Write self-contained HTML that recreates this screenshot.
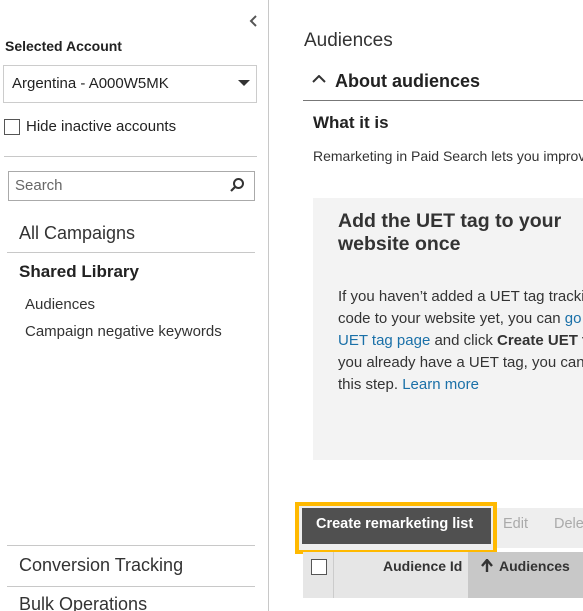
<!DOCTYPE html>
<html><head><style>
html,body{margin:0;width:583px;height:611px;overflow:hidden}
body{background:#fff;font-family:"Liberation Sans",Arial,sans-serif;color:#222;position:relative}
.a{position:absolute;white-space:nowrap}
.l{position:absolute;height:1px;background:#c8c8c8}
a{color:#1a70a8;text-decoration:none}
#r{position:absolute;left:269px;top:0;width:314px;height:611px;overflow:hidden}
#r .a{margin-left:-269px}
</style></head><body>
<div class="a" style="left:268px;top:0;width:1px;height:611px;background:#c8c8c8"></div>
<svg class="a" style="left:249px;top:14px" width="10" height="14"><path d="M7 2 L2 7 L7 12" stroke="#555" stroke-width="2" fill="none"/></svg>
<div class="a" style="left:5px;top:38px;font-size:14px;font-weight:bold">Selected Account</div>
<div class="a" style="left:3px;top:65px;width:252px;height:36px;border:1px solid #ccc"></div>
<div class="a" style="left:12px;top:75px;font-size:15px">Argentina - A000W5MK</div>
<svg class="a" style="left:238px;top:80px" width="12" height="7"><path d="M0 0 L12 0 L6 6 Z" fill="#333"/></svg>
<div class="a" style="left:4px;top:119px;width:14px;height:14px;border:1px solid #555"></div>
<div class="a" style="left:26px;top:118px;font-size:15px">Hide inactive accounts</div>
<div class="l" style="left:4px;top:156px;width:253px"></div>
<div class="a" style="left:8px;top:171px;width:245px;height:28px;border:1px solid #aaa"></div>
<div class="a" style="left:15px;top:177px;font-size:15px;color:#666">Search</div>
<svg class="a" style="left:229px;top:177px" width="16" height="16"><circle cx="9.5" cy="6.5" r="4.5" stroke="#333" stroke-width="2" fill="none"/><path d="M6 10 L2 14" stroke="#333" stroke-width="2.2"/></svg>
<div class="a" style="left:19px;top:223px;font-size:18px;color:#333">All Campaigns</div>
<div class="l" style="left:7px;top:252px;width:248px"></div>
<div class="a" style="left:19px;top:262px;font-size:17px;font-weight:bold">Shared Library</div>
<div class="a" style="left:25px;top:296px;font-size:15px;color:#333">Audiences</div>
<div class="a" style="left:25px;top:323px;font-size:15px;color:#333">Campaign negative keywords</div>
<div class="l" style="left:7px;top:545px;width:248px"></div>
<div class="a" style="left:19px;top:555px;font-size:18px;color:#333">Conversion Tracking</div>
<div class="l" style="left:7px;top:586px;width:248px"></div>
<div class="a" style="left:19px;top:594px;font-size:18px;color:#333">Bulk Operations</div>

<div id="r">
<div class="a" style="left:304px;top:30px;font-size:19px;color:#333">Audiences</div>
<svg class="a" style="left:312px;top:75px" width="14" height="9"><path d="M1 7 L7 1 L13 7" stroke="#333" stroke-width="2" fill="none"/></svg>
<div class="a" style="left:335px;top:71px;font-size:18px;font-weight:bold">About audiences</div>
<div class="a" style="left:303px;top:100px;width:280px;height:1px;background:#777"></div>
<div class="a" style="left:313px;top:113px;font-size:17px;font-weight:bold">What it is</div>
<div class="a" style="left:313px;top:148px;font-size:14px;color:#333">Remarketing in Paid Search lets you improve</div>
<div class="a" style="left:313px;top:198px;width:270px;height:262px;background:#f3f3f3"></div>
<div class="a" style="left:338px;top:210px;font-size:19.5px;line-height:23px;color:#333;font-weight:bold">Add the UET tag to your<br>website once</div>
<div class="a" style="left:338px;top:286px;font-size:15px;line-height:22px;color:#333">If you haven’t added a UET tag tracking<br>code to your website yet, you can <a>go to</a><br><a>UET tag page</a> and click <b>Create UET tag</b><br>you already have a UET tag, you can skip<br>this step. <a>Learn more</a></div>
<div class="a" style="left:303px;top:508px;width:280px;height:40px;background:#eee"></div>
<div class="a" style="left:295px;top:502px;width:194px;height:44px;border:4px solid #ffb900;background:#eee"></div>
<div class="a" style="left:302px;top:508px;width:189px;height:36px;background:#505050"></div>
<div class="a" style="left:316px;top:516px;font-size:14.5px;font-weight:bold;color:#fff">Create remarketing list</div>
<div class="a" style="left:503px;top:516px;font-size:14.5px;color:#aaa">Edit</div>
<div class="a" style="left:554px;top:516px;font-size:14.5px;color:#aaa">Delete</div>
<div class="a" style="left:303px;top:552px;width:165px;height:46px;background:#e6e6e6"></div>
<div class="a" style="left:333px;top:552px;width:1px;height:46px;background:#ccc"></div>
<div class="a" style="left:468px;top:552px;width:115px;height:46px;background:#c8c8c8"></div>
<div class="a" style="left:311px;top:559px;width:14px;height:14px;border:1px solid #555;background:#fff"></div>
<div class="a" style="left:383px;top:558px;font-size:14px;font-weight:bold;color:#333">Audience Id</div>
<svg class="a" style="left:481px;top:559px" width="12" height="13"><path d="M6 13 V3 M1 7 L6 1 L11 7" stroke="#333" stroke-width="2.4" fill="none"/></svg>
<div class="a" style="left:499px;top:558px;font-size:14px;font-weight:bold;color:#333">Audiences</div>
</div>
</body></html>
